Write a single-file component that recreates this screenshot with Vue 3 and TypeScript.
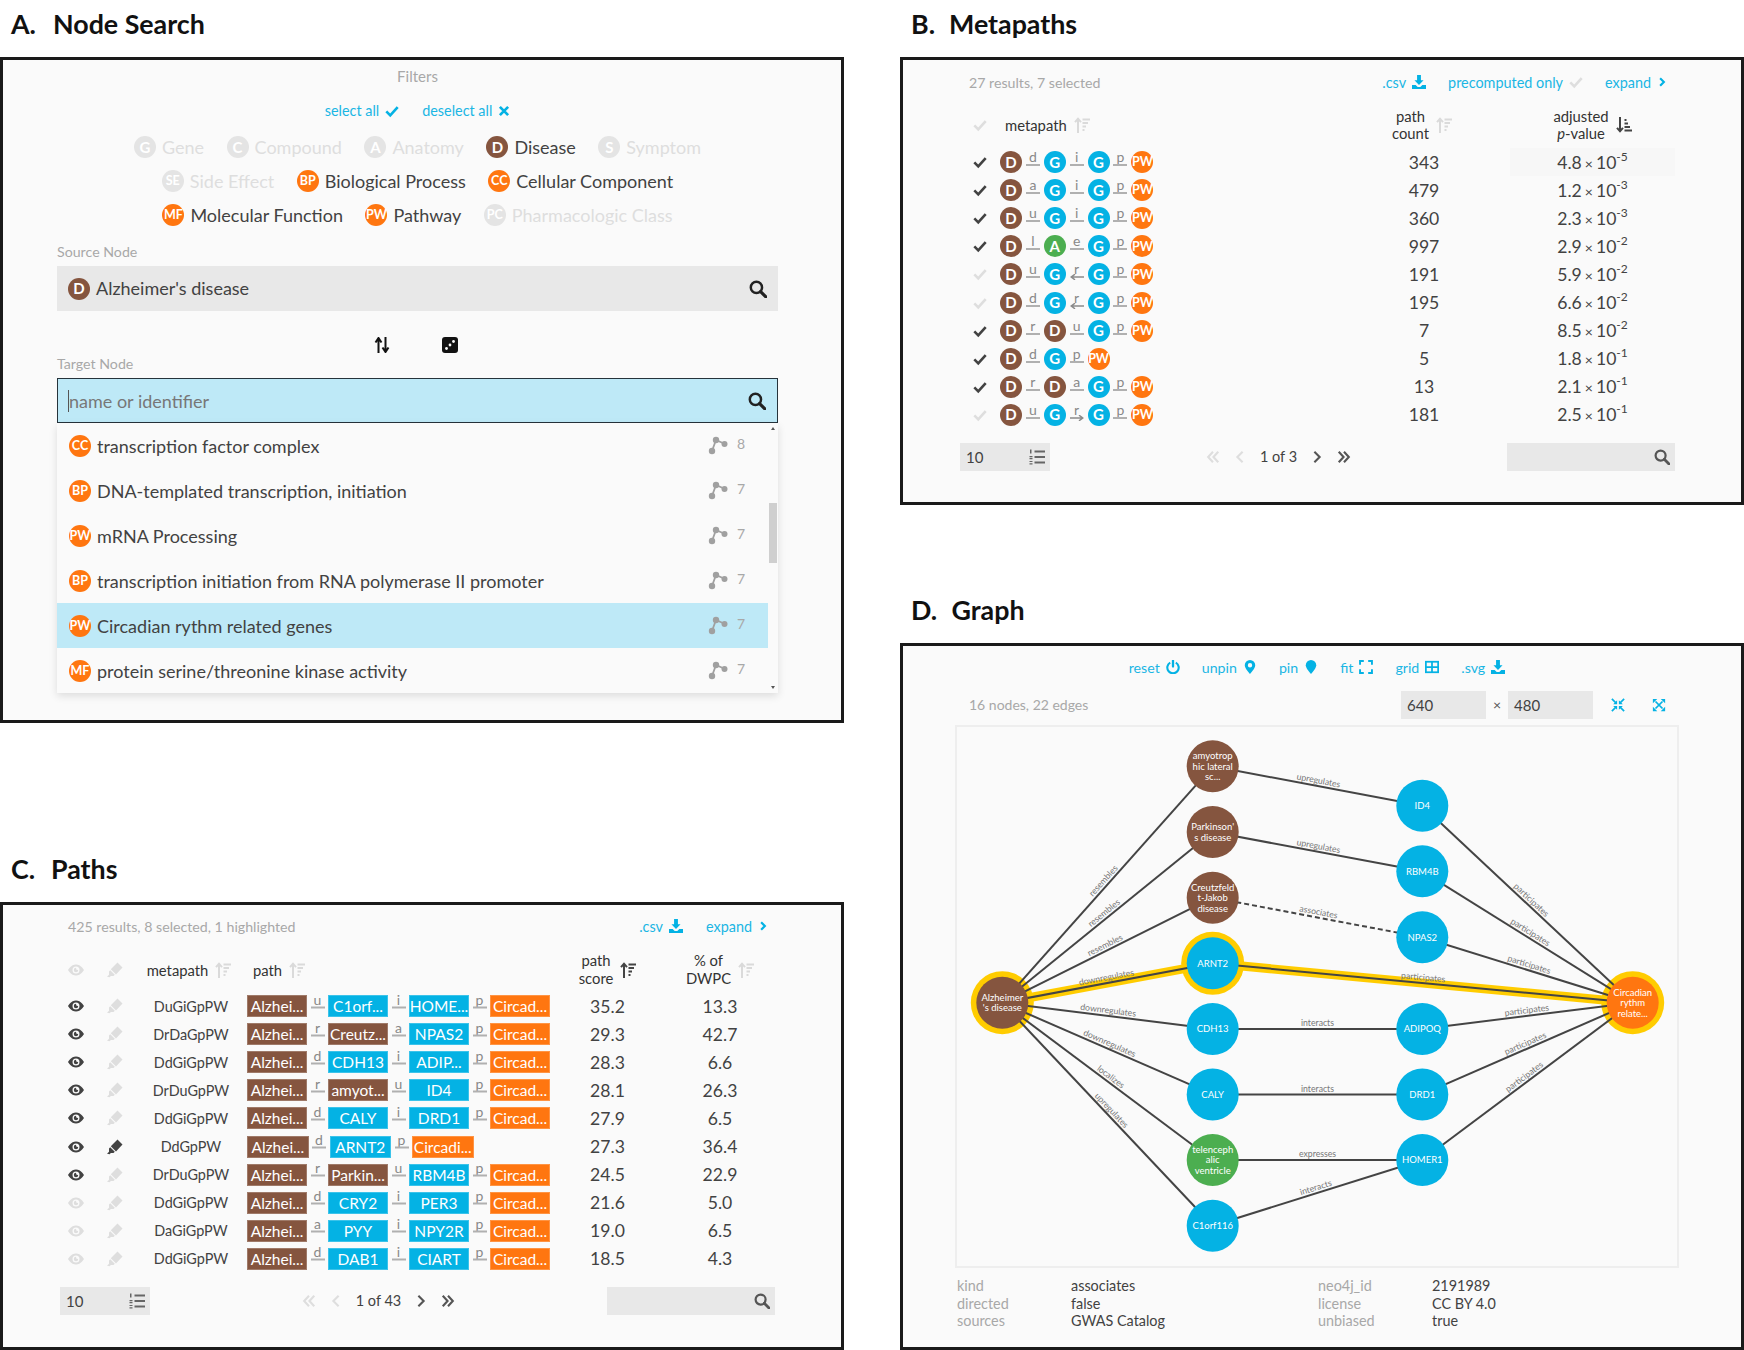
<script setup lang="ts">
interface Chip { code: string; name: string; color: string; on: boolean }
const BROWN = '#85553f', BLUE = '#04b2e4', ORANGE = '#ff7610', GREEN = '#4cae50'

const filterRows: Chip[][] = [
  [
    { code: 'G', name: 'Gene', color: BLUE, on: false },
    { code: 'C', name: 'Compound', color: BLUE, on: false },
    { code: 'A', name: 'Anatomy', color: GREEN, on: false },
    { code: 'D', name: 'Disease', color: BROWN, on: true },
    { code: 'S', name: 'Symptom', color: BROWN, on: false },
  ],
  [
    { code: 'SE', name: 'Side Effect', color: BROWN, on: false },
    { code: 'BP', name: 'Biological Process', color: ORANGE, on: true },
    { code: 'CC', name: 'Cellular Component', color: ORANGE, on: true },
  ],
  [
    { code: 'MF', name: 'Molecular Function', color: ORANGE, on: true },
    { code: 'PW', name: 'Pathway', color: ORANGE, on: true },
    { code: 'PC', name: 'Pharmacologic Class', color: BROWN, on: false },
  ],
]

const results = [
  { code: 'CC', name: 'transcription factor complex', n: 8, active: false },
  { code: 'BP', name: 'DNA-templated transcription, initiation', n: 7, active: false },
  { code: 'PW', name: 'mRNA Processing', n: 7, active: false },
  { code: 'BP', name: 'transcription initiation from RNA polymerase II promoter', n: 7, active: false },
  { code: 'PW', name: 'Circadian rythm related genes', n: 7, active: true },
  { code: 'MF', name: 'protein serine/threonine kinase activity', n: 7, active: false },
]

const nodeColor = (c: string) => (c === 'D' ? BROWN : c === 'A' ? GREEN : c === 'G' ? BLUE : ORANGE)

interface Step { l: string; dir?: 'l' | 'r' }
interface MRow { on: boolean; nodes: string[]; rels: Step[]; count: number; m: string; e: string }
const P: Step = { l: 'p' }
const metaRows: MRow[] = [
  { on: true, nodes: ['D', 'G', 'G', 'PW'], rels: [{ l: 'd' }, { l: 'i' }, P], count: 343, m: '4.8', e: '-5' },
  { on: true, nodes: ['D', 'G', 'G', 'PW'], rels: [{ l: 'a' }, { l: 'i' }, P], count: 479, m: '1.2', e: '-3' },
  { on: true, nodes: ['D', 'G', 'G', 'PW'], rels: [{ l: 'u' }, { l: 'i' }, P], count: 360, m: '2.3', e: '-3' },
  { on: true, nodes: ['D', 'A', 'G', 'PW'], rels: [{ l: 'l' }, { l: 'e' }, P], count: 997, m: '2.9', e: '-2' },
  { on: false, nodes: ['D', 'G', 'G', 'PW'], rels: [{ l: 'u' }, { l: 'r', dir: 'l' }, P], count: 191, m: '5.9', e: '-2' },
  { on: false, nodes: ['D', 'G', 'G', 'PW'], rels: [{ l: 'd' }, { l: 'r', dir: 'l' }, P], count: 195, m: '6.6', e: '-2' },
  { on: true, nodes: ['D', 'D', 'G', 'PW'], rels: [{ l: 'r' }, { l: 'u' }, P], count: 7, m: '8.5', e: '-2' },
  { on: true, nodes: ['D', 'G', 'PW'], rels: [{ l: 'd' }, P], count: 5, m: '1.8', e: '-1' },
  { on: true, nodes: ['D', 'D', 'G', 'PW'], rels: [{ l: 'r' }, { l: 'a' }, P], count: 13, m: '2.1', e: '-1' },
  { on: false, nodes: ['D', 'G', 'G', 'PW'], rels: [{ l: 'u' }, { l: 'r', dir: 'r' }, P], count: 181, m: '2.5', e: '-1' },
]

interface PRow { eye: boolean; pin: boolean; mp: string; cells: [string, string][]; rels: string[]; score: string; pct: string; wide?: boolean }
const A: [string, string] = ['Alzhei...', BROWN]
const C: [string, string] = ['Circad...', ORANGE]
const g = (s: string): [string, string] => [s, BLUE]
const d = (s: string): [string, string] => [s, BROWN]
const pathRows: PRow[] = [
  { eye: true, pin: false, mp: 'DuGiGpPW', cells: [A, g('C1orf...'), g('HOME...'), C], rels: ['u', 'i', 'p'], score: '35.2', pct: '13.3' },
  { eye: true, pin: false, mp: 'DrDaGpPW', cells: [A, d('Creutz...'), g('NPAS2'), C], rels: ['r', 'a', 'p'], score: '29.3', pct: '42.7' },
  { eye: true, pin: false, mp: 'DdGiGpPW', cells: [A, g('CDH13'), g('ADIP...'), C], rels: ['d', 'i', 'p'], score: '28.3', pct: '6.6' },
  { eye: true, pin: false, mp: 'DrDuGpPW', cells: [A, d('amyot...'), g('ID4'), C], rels: ['r', 'u', 'p'], score: '28.1', pct: '26.3' },
  { eye: true, pin: false, mp: 'DdGiGpPW', cells: [A, g('CALY'), g('DRD1'), C], rels: ['d', 'i', 'p'], score: '27.9', pct: '6.5' },
  { eye: true, pin: true, mp: 'DdGpPW', cells: [A, g('ARNT2'), ['Circadi...', ORANGE]], rels: ['d', 'p'], score: '27.3', pct: '36.4', wide: true },
  { eye: true, pin: false, mp: 'DrDuGpPW', cells: [A, d('Parkin...'), g('RBM4B'), C], rels: ['r', 'u', 'p'], score: '24.5', pct: '22.9' },
  { eye: false, pin: false, mp: 'DdGiGpPW', cells: [A, g('CRY2'), g('PER3'), C], rels: ['d', 'i', 'p'], score: '21.6', pct: '5.0' },
  { eye: false, pin: false, mp: 'DaGiGpPW', cells: [A, g('PYY'), g('NPY2R'), C], rels: ['a', 'i', 'p'], score: '19.0', pct: '6.5' },
  { eye: false, pin: false, mp: 'DdGiGpPW', cells: [A, g('DAB1'), g('CIART'), C], rels: ['d', 'i', 'p'], score: '18.5', pct: '4.3' },
]

interface GNode { id: string; x: number; y: number; color: string; lines: string[]; ring?: boolean }
const X0 = 1002.3, X1 = 1212.7, X2 = 1422.3, X3 = 1632.7
const nodes: GNode[] = [
  { id: 'alz', x: X0, y: 1002.7, color: BROWN, lines: ['Alzheimer', "'s disease"], ring: true },
  { id: 'amy', x: X1, y: 766.3, color: BROWN, lines: ['amyotrop', 'hic lateral', 'sc...'] },
  { id: 'par', x: X1, y: 832, color: BROWN, lines: ["Parkinson'", 's disease'] },
  { id: 'cre', x: X1, y: 897.7, color: BROWN, lines: ['Creutzfeld', 't-Jakob', 'disease'] },
  { id: 'arn', x: X1, y: 963.3, color: BLUE, lines: ['ARNT2'], ring: true },
  { id: 'cdh', x: X1, y: 1029, color: BLUE, lines: ['CDH13'] },
  { id: 'cal', x: X1, y: 1094.4, color: BLUE, lines: ['CALY'] },
  { id: 'tel', x: X1, y: 1160, color: GREEN, lines: ['telenceph', 'alic', 'ventricle'] },
  { id: 'c1o', x: X1, y: 1225.7, color: BLUE, lines: ['C1orf116'] },
  { id: 'id4', x: X2, y: 805.7, color: BLUE, lines: ['ID4'] },
  { id: 'rbm', x: X2, y: 871.3, color: BLUE, lines: ['RBM4B'] },
  { id: 'npa', x: X2, y: 937.3, color: BLUE, lines: ['NPAS2'] },
  { id: 'adi', x: X2, y: 1029, color: BLUE, lines: ['ADIPOQ'] },
  { id: 'drd', x: X2, y: 1094.4, color: BLUE, lines: ['DRD1'] },
  { id: 'hom', x: X2, y: 1160, color: BLUE, lines: ['HOMER1'] },
  { id: 'cir', x: X3, y: 1002.7, color: ORANGE, lines: ['Circadian', 'rythm', 'relate...'], ring: true },
]
const nodeById = Object.fromEntries(nodes.map((n) => [n.id, n])) as Record<string, GNode>

const rawEdges: [string, string, string, number?][] = [
  ['alz', 'amy', 'resembles'], ['alz', 'par', 'resembles'], ['alz', 'cre', 'resembles'],
  ['alz', 'arn', 'downregulates', 1], ['alz', 'cdh', 'downregulates'], ['alz', 'cal', 'downregulates'],
  ['alz', 'tel', 'localizes'], ['alz', 'c1o', 'upregulates'],
  ['amy', 'id4', 'upregulates'], ['par', 'rbm', 'upregulates'], ['cre', 'npa', 'associates', 2],
  ['arn', 'cir', 'participates', 1], ['cdh', 'adi', 'interacts'], ['cal', 'drd', 'interacts'],
  ['tel', 'hom', 'expresses'], ['c1o', 'hom', 'interacts'],
  ['id4', 'cir', 'participates'], ['rbm', 'cir', 'participates'], ['npa', 'cir', 'participates'],
  ['adi', 'cir', 'participates'], ['drd', 'cir', 'participates'], ['hom', 'cir', 'participates'],
]
const edges = rawEdges.map(([a, b, label, kind]) => {
  const s = nodeById[a], t = nodeById[b]
  const dx = t.x - s.x, dy = t.y - s.y
  const len = Math.hypot(dx, dy)
  const nx = dy / len, ny = -dx / len
  const mx = (s.x + t.x) / 2 + nx * 5.2, my = (s.y + t.y) / 2 + ny * 5.2
  const angle = (Math.atan2(dy, dx) * 180) / Math.PI
  return { x1: s.x, y1: s.y, x2: t.x, y2: t.y, label, kind, mx, my, angle }
})
const nodeLineY = (n: GNode, i: number) => n.y + (i - (n.lines.length - 1) / 2) * 10.5 + 3.3
</script>

<template>
  <svg class="defs" aria-hidden="true">
    <symbol id="i-check" viewBox="0 0 16 16"><path d="M1.500 8.500 6 13 14.500 3.500" fill="none" stroke="currentColor" stroke-width="3" /></symbol>
    <symbol id="i-times" viewBox="0 0 16 16"><path d="M2.500 2.500l11 11M13.500 2.500l-11 11" fill="none" stroke="currentColor" stroke-width="3.600" /></symbol>
    <symbol id="i-search" viewBox="0 0 16 16"><circle cx="6.600" cy="6.600" r="5" fill="none" stroke="currentColor" stroke-width="2.200" /><path d="M10.300 10.300 15 15" stroke="currentColor" stroke-width="2.800" stroke-linecap="round" /></symbol>
    <symbol id="i-download" viewBox="0 0 16 16"><path d="M5.800 0h4.400v6h3L8 11.400 2.800 6h3zM0 11.500h4.200L6.500 13.700h3l2.300-2.200H16V16H0z" fill="currentColor" /></symbol>
    <symbol id="i-chev" viewBox="0 0 16 16"><path d="M5 2l6 6-6 6" fill="none" stroke="currentColor" stroke-width="3.400" /></symbol>
    <symbol id="i-sort-up" viewBox="0 0 16 16"><path d="M4 16V2M1 5.200 4 1.800l3 3.400M8.500 2.500h7.500M8.500 6H14M8.500 9.500H12M8.500 13h2" fill="none" stroke="currentColor" stroke-width="2" /></symbol>
    <symbol id="i-sort-down" viewBox="0 0 16 16"><path d="M4 0v14M1 10.800 4 14.200l3-3.400M8.500 3h2M8.500 6.500H12M8.500 10H14M8.500 13.500H16" fill="none" stroke="currentColor" stroke-width="2" /></symbol>
    <symbol id="i-swap" viewBox="0 0 16 16"><path d="M4.500 16V2M1.500 5.500 4.500 1l3 4.500M11.500 0v14M8.500 10.500l3 4.500 3-4.500" fill="none" stroke="currentColor" stroke-width="2" /></symbol>
    <symbol id="i-dice" viewBox="0 0 16 16"><rect width="16" height="16" rx="3" fill="currentColor" /><circle cx="11.500" cy="4.500" r="1.400" fill="#fafafa" /><circle cx="8" cy="8" r="1.400" fill="#fafafa" /><circle cx="4.500" cy="11.500" r="1.400" fill="#fafafa" /></symbol>
    <symbol id="i-path" viewBox="0 0 20 20"><path d="M4 16 8 5l9 4" fill="none" stroke="currentColor" stroke-width="1.800" /><circle cx="4" cy="16" r="3.200" fill="currentColor" /><circle cx="8" cy="5" r="3.200" fill="currentColor" /><circle cx="16.500" cy="9" r="3" fill="currentColor" /></symbol>
    <symbol id="i-list" viewBox="0 0 16 16"><path d="M5.500 2.500H16M5.500 8H16M5.500 13.500H16" fill="none" stroke="currentColor" stroke-width="2.200" /><path d="M1 .5h1.500v4H1zM.5 7h3v1.200h-3zM.5 9h3v1.200h-3zM.5 12h3v1h-3zM.5 14.200h3v1.200h-3z" fill="currentColor" /></symbol>
    <symbol id="i-dleft" viewBox="0 0 16 16"><path d="M8 2 2.500 8 8 14M14 2 8.500 8 14 14" fill="none" stroke="currentColor" stroke-width="2.400" /></symbol>
    <symbol id="i-dright" viewBox="0 0 16 16"><path d="M2 2l5.500 6L2 14M8 2l5.500 6L8 14" fill="none" stroke="currentColor" stroke-width="2.400" /></symbol>
    <symbol id="i-left" viewBox="0 0 16 16"><path d="M11 2 5 8l6 6" fill="none" stroke="currentColor" stroke-width="2.400" /></symbol>
    <symbol id="i-right" viewBox="0 0 16 16"><path d="M5 2l6 6-6 6" fill="none" stroke="currentColor" stroke-width="2.400" /></symbol>
    <symbol id="i-eye" viewBox="0 0 16 16"><path fill-rule="evenodd" d="M0 8s3-5.500 8-5.500S16 8 16 8s-3 5.500-8 5.500S0 8 0 8zm8-3.500a3.500 3.500 0 1 0 0 7 3.500 3.500 0 0 0 0-7z" fill="currentColor" /><path d="M8 5.800A2.200 2.200 0 1 0 10.200 8 2 2 0 0 1 8 5.800z" fill="currentColor" /></symbol>
    <symbol id="i-pen" viewBox="0 0 16 16"><path d="M10.500.5l5 5L9 12.500 3.800 7.300zM3.200 8.200l4.600 4.600-1.300 1.300H3.800L2.700 15.200 0 14.800l2-2V9.400z" fill="currentColor" /></symbol>
    <symbol id="i-power" viewBox="0 0 16 16"><path d="M11.200 3A6.500 6.500 0 1 1 4.800 3" fill="none" stroke="currentColor" stroke-width="2.400" /><path d="M8 .5v7" stroke="currentColor" stroke-width="2.600" stroke-linecap="round" /></symbol>
    <symbol id="i-pin-o" viewBox="0 0 16 16"><path fill-rule="evenodd" d="M8 0a6 6 0 0 0-6 6c0 3.600 6 10 6 10s6-6.400 6-10a6 6 0 0 0-6-6zm0 8.500a2.500 2.500 0 1 1 0-5 2.500 2.500 0 0 1 0 5z" fill="currentColor" /></symbol>
    <symbol id="i-pin" viewBox="0 0 16 16"><path d="M8 0a6 6 0 0 0-6 6c0 3.600 6 10 6 10s6-6.400 6-10a6 6 0 0 0-6-6z" fill="currentColor" /></symbol>
    <symbol id="i-fit" viewBox="0 0 16 16"><path d="M1.200 5.500V1.200h4.300M10.500 1.200h4.300v4.300M14.800 10.500v4.300h-4.300M5.500 14.800H1.200v-4.300" fill="none" stroke="currentColor" stroke-width="2.200" /></symbol>
    <symbol id="i-grid" viewBox="0 0 16 16"><rect x="1" y="2" width="14" height="12" fill="none" stroke="currentColor" stroke-width="2" /><path d="M8 2v12M1 8h14" stroke="currentColor" stroke-width="2" /></symbol>
    <symbol id="i-shrink" viewBox="0 0 16 16"><path d="M1 1l5 5M15 1l-5 5M1 15l5-5M15 15l-5-5" stroke="currentColor" stroke-width="2" /><path d="M7 2.500V7H2.500zM9 2.500V7h4.500zM7 13.500V9H2.500zM9 13.500V9h4.500z" fill="currentColor" /></symbol>
    <symbol id="i-grow" viewBox="0 0 16 16"><path d="M4 4l8 8M12 4l-8 8" stroke="currentColor" stroke-width="2" /><path d="M1 1h5L1 6zM15 1h-5l5 5zM1 15h5l-5-5zM15 15h-5l5-5z" fill="currentColor" /></symbol>
  </svg>

  <div class="page">
    <div class="col">
      <section class="sec-a">
        <h2 class="head"><span class="head-l hl-a">A.</span><span>Node Search</span></h2>
        <div class="panel panel-a">
          <div class="filters-title">Filters</div>
          <div class="sel-links">
            <span class="link">select all <svg class="ic14"><use href="#i-check" /></svg></span>
            <span class="link">deselect all <svg class="ic12"><use href="#i-times" /></svg></span>
          </div>
          <div v-for="(row, i) in filterRows" :key="i" class="chip-row">
            <span v-for="c in row" :key="c.code" class="chip" :class="{ off: !c.on }">
              <span class="dot" :class="{ small: c.code.length > 1 }" :style="{ background: c.on ? c.color : '#e4e4e4' }">{{ c.code }}</span>
              {{ c.name }}
            </span>
          </div>
          <div class="field-label source-label">Source Node</div>
          <div class="field">
            <span class="dot" :style="{ background: BROWN }">D</span>
            <span class="field-text">Alzheimer's disease</span>
            <svg class="ic18 field-search"><use href="#i-search" /></svg>
          </div>
          <div class="swap-row">
            <svg class="ic16"><use href="#i-swap" /></svg>
            <svg class="ic16"><use href="#i-dice" /></svg>
          </div>
          <div class="field-label target-label">Target Node</div>
          <div class="field field-active">
            <span class="caret"></span>
            <span class="placeholder">name or identifier</span>
            <svg class="ic18 field-search"><use href="#i-search" /></svg>
          </div>
          <div class="dropdown">
            <div class="drop-list">
              <div v-for="r in results" :key="r.name" class="drop-row" :class="{ active: r.active }">
                <span class="dot small" :style="{ background: ORANGE }">{{ r.code }}</span>
                <span class="drop-name">{{ r.name }}</span>
                <svg class="drop-ic"><use href="#i-path" /></svg>
                <span class="drop-n">{{ r.n }}</span>
              </div>
            </div>
            <div class="scrollbar">
              <span class="arrow-up"></span>
              <span class="thumb"></span>
              <span class="arrow-down"></span>
            </div>
          </div>
        </div>
      </section>

      <section class="sec-c">
        <h2 class="head"><span class="head-l hl-c">C.</span><span>Paths</span></h2>
        <div class="panel panel-c">
          <div class="summary summary-c">
            <span class="muted">425 results, 8 selected, 1 highlighted</span>
            <span class="links">
              <span class="link">.csv <svg class="ic14"><use href="#i-download" /></svg></span>
              <span class="link">expand <svg class="ic10"><use href="#i-chev" /></svg></span>
            </span>
          </div>
          <div class="p-head">
            <span class="center"><svg class="ic16 faint"><use href="#i-eye" /></svg></span>
            <span class="center"><svg class="ic16 faint"><use href="#i-pen" /></svg></span>
            <span class="center th th-left">metapath <svg class="ic16 sort"><use href="#i-sort-up" /></svg></span>
            <span class="th th-path">path <svg class="ic16 sort"><use href="#i-sort-up" /></svg></span>
            <span class="center th"><span class="two">path<br />score</span><svg class="ic16 sort-on"><use href="#i-sort-up" /></svg></span>
            <span></span>
            <span class="center th"><span class="two">% of<br />DWPC</span><svg class="ic16 sort"><use href="#i-sort-up" /></svg></span>
          </div>
          <div v-for="(r, i) in pathRows" :key="i" class="p-row">
            <span class="center"><svg class="ic16" :class="{ faint: !r.eye }"><use href="#i-eye" /></svg></span>
            <span class="center"><svg class="ic16" :class="{ faint: !r.pin }"><use href="#i-pen" /></svg></span>
            <span class="center mp">{{ r.mp }}</span>
            <span class="cells">
              <template v-for="(c, j) in r.cells" :key="j">
                <span class="cell" :class="{ wide: r.wide }" :style="{ background: c[1] }">{{ c[0] }}</span>
                <span v-if="j < r.rels.length" class="rel rel-c">
                  <span class="rel-l">{{ r.rels[j] }}</span>
                  <svg class="rel-line" viewBox="0 0 14 6"><path d="M0 3h14" stroke="#b0b0b0" stroke-width="2" /></svg>
                </span>
              </template>
            </span>
            <span class="center num">{{ r.score }}</span>
            <span></span>
            <span class="center num">{{ r.pct }}</span>
          </div>
          <div class="pager">
            <div class="pg-select"><span>10</span><svg class="ic16 pg-list"><use href="#i-list" /></svg></div>
            <div class="pg-nav">
              <svg class="ic14 faint"><use href="#i-dleft" /></svg>
              <svg class="ic14 faint"><use href="#i-left" /></svg>
              <span>1 of 43</span>
              <svg class="ic14 pg-on"><use href="#i-right" /></svg>
              <svg class="ic14 pg-on"><use href="#i-dright" /></svg>
            </div>
            <div class="pg-search"><svg class="ic16 pg-mag"><use href="#i-search" /></svg></div>
          </div>
        </div>
      </section>
    </div>

    <div class="col">
      <section class="sec-b">
        <h2 class="head"><span class="head-l hl-b">B.</span><span>Metapaths</span></h2>
        <div class="panel panel-b">
          <div class="summary summary-b">
            <span class="muted">27 results, 7 selected</span>
            <span class="links">
              <span class="link">.csv <svg class="ic14"><use href="#i-download" /></svg></span>
              <span class="link">precomputed only <svg class="ic14 faint"><use href="#i-check" /></svg></span>
              <span class="link">expand <svg class="ic10"><use href="#i-chev" /></svg></span>
            </span>
          </div>
          <div class="m-head">
            <span class="center"><svg class="ic14 faint"><use href="#i-check" /></svg></span>
            <span class="th th-mp">metapath <svg class="ic16 sort"><use href="#i-sort-up" /></svg></span>
            <span class="center th th-left"><span class="two">path<br />count</span><svg class="ic16 sort"><use href="#i-sort-up" /></svg></span>
            <span></span>
            <span class="center th"><span class="two">adjusted<br /><i>p</i>-value</span><svg class="ic16 sort-on"><use href="#i-sort-down" /></svg></span>
          </div>
          <div v-for="(r, i) in metaRows" :key="i" class="m-row">
            <span class="center"><svg class="ic14" :class="{ faint: !r.on }"><use href="#i-check" /></svg></span>
            <span class="chain">
              <template v-for="(n, j) in r.nodes" :key="j">
                <span class="dot" :class="{ small: n.length > 1 }" :style="{ background: nodeColor(n) }">{{ n }}</span>
                <span v-if="j < r.rels.length" class="rel">
                  <span class="rel-l">{{ r.rels[j].l }}</span>
                  <svg class="rel-line" viewBox="0 0 14 6">
                    <path v-if="r.rels[j].dir === 'l'" d="M1 3h13M5 .2 1.200 3 5 5.800" fill="none" stroke="#8a8a8a" stroke-width="1.500" />
                    <path v-else-if="r.rels[j].dir === 'r'" d="M0 3h13M9 .2 12.800 3 9 5.800" fill="none" stroke="#8a8a8a" stroke-width="1.500" />
                    <path v-else d="M0 3h14" stroke="#b0b0b0" stroke-width="2" />
                  </svg>
                </span>
              </template>
            </span>
            <span class="center num">{{ r.count }}</span>
            <span></span>
            <span class="center num val" :class="{ 'val-first': i === 0 }"><span>{{ r.m }} <small class="times">×</small> 10<sup>{{ r.e }}</sup></span></span>
          </div>
          <div class="pager">
            <div class="pg-select"><span>10</span><svg class="ic16 pg-list"><use href="#i-list" /></svg></div>
            <div class="pg-nav">
              <svg class="ic14 faint"><use href="#i-dleft" /></svg>
              <svg class="ic14 faint"><use href="#i-left" /></svg>
              <span>1 of 3</span>
              <svg class="ic14 pg-on"><use href="#i-right" /></svg>
              <svg class="ic14 pg-on"><use href="#i-dright" /></svg>
            </div>
            <div class="pg-search"><svg class="ic16 pg-mag"><use href="#i-search" /></svg></div>
          </div>
        </div>
      </section>

      <section class="sec-d">
        <h2 class="head"><span class="head-l hl-d">D.</span><span>Graph</span></h2>
        <div class="panel panel-d">
          <div class="toolbar">
            <span class="link">reset <svg class="ic14"><use href="#i-power" /></svg></span>
            <span class="link">unpin <svg class="ic14"><use href="#i-pin-o" /></svg></span>
            <span class="link">pin <svg class="ic14"><use href="#i-pin" /></svg></span>
            <span class="link">fit <svg class="ic14"><use href="#i-fit" /></svg></span>
            <span class="link">grid <svg class="ic14"><use href="#i-grid" /></svg></span>
            <span class="link">.svg <svg class="ic14"><use href="#i-download" /></svg></span>
          </div>
          <div class="size-row">
            <span class="muted">16 nodes, 22 edges</span>
            <span class="size-ctl">
              <span class="size-box">640</span>
              <span class="size-x">×</span>
              <span class="size-box">480</span>
              <svg class="ic14 link-ic first-ic"><use href="#i-shrink" /></svg>
              <svg class="ic14 link-ic"><use href="#i-grow" /></svg>
            </span>
          </div>
          <div class="graph">
            <svg class="graph-svg" viewBox="957 727 720 539">
              <g v-for="n in nodes.filter((x) => x.ring)" :key="'r' + n.id">
                <circle :cx="n.x" :cy="n.y" r="31.500" fill="#ffcc00" />
              </g>
              <g v-for="(e, i) in edges.filter((x) => x.kind === 1)" :key="'h' + i">
                <line :x1="e.x1" :y1="e.y1" :x2="e.x2" :y2="e.y2" stroke="#ffcc00" stroke-width="9" />
              </g>
              <g v-for="(e, i) in edges" :key="'e' + i">
                <line :x1="e.x1" :y1="e.y1" :x2="e.x2" :y2="e.y2" stroke="#444" stroke-width="2" :stroke-dasharray="e.kind === 2 ? '5 3' : undefined" />
              </g>
              <g v-for="n in nodes" :key="n.id">
                <circle :cx="n.x" :cy="n.y" r="26" :fill="n.color" />
                <text class="node-t" text-anchor="middle">
                  <tspan v-for="(l, i) in n.lines" :key="i" :x="n.x" :y="nodeLineY(n, i)">{{ l }}</tspan>
                </text>
              </g>
              <g v-for="(e, i) in edges" :key="'l' + i">
                <text class="edge-t" text-anchor="middle" :transform="`translate(${e.mx} ${e.my}) rotate(${e.angle})`" y="2.500">{{ e.label }}</text>
              </g>
            </svg>
          </div>
          <div class="info">
            <span class="muted">kind</span><span>associates</span><span class="muted">neo4j_id</span><span>2191989</span>
            <span class="muted">directed</span><span>false</span><span class="muted">license</span><span>CC BY 4.0</span>
            <span class="muted">sources</span><span>GWAS Catalog</span><span class="muted">unbiased</span><span>true</span>
          </div>
        </div>
      </section>
    </div>
  </div>
</template>

<style>
html, body { margin: 0; background: #fff; }
</style>

<style scoped>
.defs { width: 0; height: 0; position: absolute; }
.page {
  width: 1744px; height: 1350px; display: flex; justify-content: space-between; overflow: hidden;
  font-family: Lato, "Liberation Sans", sans-serif; font-size: 18px; color: #424242;
}
.col { width: 844px; display: flex; flex-direction: column; }
.col:first-child { gap: 122px; }
.col:last-child { gap: 81px; }
.head {
  height: 57px; margin: 0; display: flex; align-items: center; padding: 0 0 9px 11px; box-sizing: border-box;
  font-size: 26.800px; font-weight: 700; color: #111;
}
.hl-a { width: 42px; }
.hl-b { width: 38px; }
.hl-c { width: 40px; }
.hl-d { width: 40.500px; }
.panel { border: 3px solid #1a1a1a; background: #fafafa; box-sizing: border-box; }
.panel-a { height: 666px; padding: 0 63px 0 54px; }
.panel-b { height: 448px; padding: 0 66px 0 57px; }
.panel-c { height: 448px; padding: 0 66px 0 57px; }
.panel-d { height: 707px; padding: 0 62px 0 52px; }

svg { flex: none; display: inline-block; }
.ic10 { width: 10px; height: 10px; }
.ic12 { width: 12px; height: 12px; }
.ic14 { width: 14px; height: 14px; }
.ic16 { width: 16px; height: 16px; }
.ic18 { width: 18px; height: 18px; }
.faint { color: #dedede; }
.sort { color: #dadada; }
.sort-on { color: #444; }
.muted { color: #a8a8a8; }
.link { color: #1bb6e4; display: inline-flex; align-items: center; gap: 6px; font-size: 14.400px; }
.link svg:not(.faint) { color: #04b2e4; }
.link-ic { color: #04b2e4; }
.center { display: flex; align-items: center; justify-content: center; }

.dot {
  width: 22px; height: 22px; border-radius: 50%; flex: none; color: #fff; display: inline-flex;
  align-items: center; justify-content: center; font-size: 15px; font-weight: 700; line-height: 1;
}
.dot.small { font-size: 12.500px; padding-top: 1px; box-sizing: border-box; }

.filters-title { height: 33px; line-height: 33px; text-align: center; color: #a8a8a8; font-size: 15px; }
.sel-links { height: 35px; display: flex; justify-content: center; align-items: center; gap: 23px; }
.chip-row { height: 33.700px; display: flex; justify-content: center; align-items: center; gap: 22.500px; }
.sel-links + .chip-row { margin-top: 2.500px; }
.chip { display: inline-flex; align-items: center; gap: 6px; white-space: nowrap; }
.chip.off { color: #dedede; }
.field-label { color: #a8a8a8; font-size: 14.200px; height: 18px; line-height: 18px; }
.source-label { margin-top: 11.500px; margin-bottom: 5px; }
.target-label { margin-bottom: 5px; }
.field { height: 45px; background: #e8e8e8; display: flex; align-items: center; padding: 0 11px; box-sizing: border-box; gap: 6px; }
.field-text { flex: 1; margin-top: -2px; }
.field-search { color: #222; margin-left: auto; }
.field-active { background: #bee9f7; border: 1.500px solid #26333b; padding-left: 10px; color: #777; gap: 0; }
.caret { width: 1px; height: 22px; background: #555; }
.swap-row { height: 44px; padding-top: 26px; box-sizing: border-box; display: flex; align-items: flex-start; justify-content: center; gap: 52px; color: #111; margin-left: -3px; }
.dropdown { height: 270px; display: flex; background: #fafafa; box-shadow: 0 3px 8px rgba(0, 0, 0, .12); }
.drop-list { flex: 1; }
.drop-row { height: 45px; display: flex; align-items: center; padding: 0 23px 0 12px; gap: 6px; box-sizing: border-box; }
.drop-row.active { background: #bee9f7; }
.drop-name { flex: 1; }
.drop-ic { width: 20px; height: 20px; color: #a0a0a0; margin-top: -2px; }
.drop-n { color: #a8a8a8; font-size: 14px; width: 8px; margin-left: 3px; margin-top: -4px; }
.scrollbar { width: 10px; display: flex; flex-direction: column; align-items: center; }
.arrow-up { margin-top: 4px; border: 2.500px solid transparent; border-top: 0; border-bottom: 3px solid #555; }
.thumb { width: 8px; height: 60px; background: #cfcfcf; margin-top: 73px; }
.arrow-down { margin-top: auto; margin-bottom: 4px; border: 2.500px solid transparent; border-bottom: 0; border-top: 3px solid #555; }

.summary { display: flex; justify-content: space-between; align-items: center; font-size: 14.200px; height: 18px; }
.links { display: inline-flex; align-items: center; }
.summary-b { margin-top: 13px; padding: 0 8px 0 9px; }
.summary-b .links { gap: 22px; }
.summary-c { margin-top: 12px; padding: 0 7px 0 8px; }
.summary-c .links { gap: 23px; }
.th { font-size: 14.800px; color: #333; gap: 7px; }
.th-left { padding-right: 4px; }
.two { text-align: center; line-height: 17.500px; display: block; }
.num { font-size: 17.600px; }

.m-head, .m-row { display: grid; grid-template-columns: 40px 384px 80px 46px 165px; align-items: center; }
.m-head { height: 46px; margin-top: 11px; }
.th-mp { display: flex; align-items: center; padding-left: 5px; }
.m-row { height: 28.100px; }
.chain { display: flex; align-items: center; }
.rel { width: 14px; margin: 0 3.900px; display: flex; flex-direction: column; align-items: center; align-self: flex-start; }
.chain .rel { margin-top: 0; }
.rel-l { height: 12px; line-height: 12px; font-size: 14px; color: #888; }
.rel-line { width: 14px; height: 6px; margin-top: -1px; }
.val { height: 100%; word-spacing: -1.500px; }
.val sup { font-size: 12px; line-height: 0; vertical-align: 8px; margin-left: 0; }
.times { font-size: 14px; }
.val-first { background: #f7f7f7; }

.p-head, .p-row { display: grid; grid-template-columns: 32px 46px 106px 331px 65px 45px 70px; align-items: center; }
.p-head { height: 45px; margin-top: 12px; }
.th-path { display: flex; align-items: center; padding-left: 9px; }
.p-row { height: 28.100px; }
.mp { font-size: 14.400px; }
.cells { display: flex; align-items: center; padding-left: 3px; }
.cell {
  width: 60px; height: 22px; box-sizing: border-box; color: #fff; font-size: 15.500px; text-align: center;
  line-height: 22px; white-space: nowrap; overflow: hidden; flex: none; box-shadow: inset 0 0 0 1px rgba(255, 255, 255, .22);
}
.cell.wide { width: 61.500px; }
.rel-c { margin: 0 3.500px; align-self: auto; transform: translateY(-4.500px); }

.pager { height: 28px; margin-top: 14px; display: flex; justify-content: space-between; align-items: center; }
.pg-select { width: 90px; height: 28px; background: #e8e8e8; display: flex; align-items: center; justify-content: space-between; padding: 0 5px 0 6px; box-sizing: border-box; font-size: 15px; }
.pg-list { color: #666; }
.pg-nav { display: flex; align-items: center; gap: 13px; font-size: 14.500px; }
.pg-on { color: #555; }
.pg-search { width: 168px; height: 28px; background: #e8e8e8; display: flex; align-items: center; justify-content: flex-end; padding-right: 5px; box-sizing: border-box; }
.pg-mag { color: #555; }

.toolbar { height: 42px; display: flex; justify-content: center; align-items: center; gap: 22px; }
.toolbar .link { font-size: 14.200px; }
.size-row { height: 33px; display: flex; align-items: center; justify-content: space-between; padding-left: 14px; font-size: 14px; }
.size-ctl { display: flex; align-items: center; padding-right: 13px; }
.size-box { width: 85px; height: 28px; background: #e8e8e8; display: flex; align-items: center; padding-left: 6px; box-sizing: border-box; font-size: 15px; }
.size-x { width: 22px; text-align: center; color: #555; }
.first-ic { margin-left: 18px; }
.first-ic + .link-ic { margin-left: 27px; }
.graph { height: 543px; margin-top: 4px; border: 2px solid #eeeeee; box-sizing: border-box; }
.graph-svg { width: 720px; height: 539px; display: block; }
.node-t { fill: #fff; font-size: 9.500px; font-family: Lato, sans-serif; }
.edge-t { fill: #777; font-size: 8.700px; font-family: Lato, sans-serif; }
.info {
  display: grid; grid-template-columns: 114px 247px 114px 1fr; padding: 9px 0 0 2px; line-height: 17.500px; font-size: 14.400px;
}
</style>
